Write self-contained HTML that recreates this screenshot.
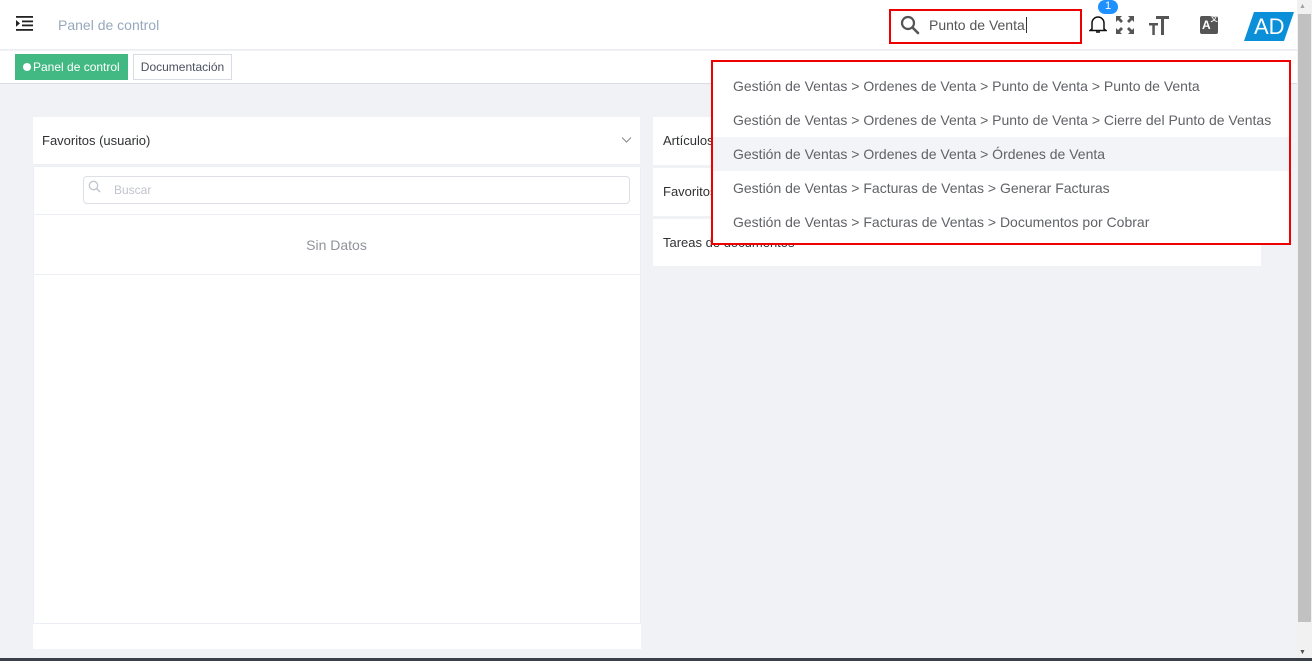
<!DOCTYPE html>
<html><head><meta charset="utf-8"><style>
*{box-sizing:border-box;margin:0;padding:0}
body{width:1312px;height:661px;overflow:hidden;background:#f1f2f6;font-family:"Liberation Sans",sans-serif;position:relative}
.a{position:absolute}
</style></head><body>
<div class="a" style="left:0;top:0;width:1297px;height:50px;background:#fff;border-bottom:1px solid #eceef2"></div>
<svg class="a" style="left:16px;top:16px" width="18" height="15" viewBox="0 0 18 15"><rect x="0" y="0" width="17" height="1.8" fill="#222"/><rect x="6" y="4.5" width="11" height="1.8" fill="#222"/><rect x="6" y="8.5" width="11" height="1.8" fill="#222"/><rect x="0" y="13" width="17" height="1.8" fill="#222"/><path d="M0 4 L4 7.4 L0 10.8Z" fill="#222"/></svg>
<div class="a" style="left:58px;top:17px;font-size:14px;color:#97a8be">Panel de control</div>
<div class="a" style="left:889px;top:9px;width:193px;height:35px;border:2px solid #e00"></div>
<svg class="a" style="left:900px;top:15px" width="20" height="20" viewBox="0 0 20 20"><circle cx="8" cy="8" r="6" fill="none" stroke="#555" stroke-width="2.2"/><path d="M12.5 12.5 L18 18" stroke="#555" stroke-width="2.6" stroke-linecap="round"/></svg>
<div class="a" style="left:929px;top:17px;font-size:14px;color:#555">Punto de Venta<span style="border-left:1px solid #333;margin-left:1px"></span></div>
<svg class="a" style="left:1089px;top:15px" width="18" height="19" viewBox="0 0 18 19"><path d="M3 14 L3 8 A6 6 0 0 1 15 8 L15 14 L17 15.5 L1 15.5 Z" fill="none" stroke="#111" stroke-width="1.5"/><path d="M7 17 h4" stroke="#111" stroke-width="1.5"/></svg>
<div class="a" style="left:1098px;top:0;width:20px;height:14px;border-radius:7px;background:#1e90ff;color:#fff;font-size:11px;text-align:center;line-height:13px">1</div>
<svg class="a" style="left:1116px;top:16px" width="18" height="18" viewBox="0 0 18 18" fill="#555"><path d="M0 0h6l-2 2 3 3-2 2-3-3-2 2z M18 0v6l-2-2-3 3-2-2 3-3-2-2z M0 18v-6l2 2 3-3 2 2-3 3 2 2z M18 18h-6l2-2-3-3 2-2 3 3 2-2z"/></svg>
<svg class="a" style="left:1149px;top:16px" width="20" height="19" viewBox="0 0 20 19" fill="#555"><rect x="7" y="0" width="13" height="3"/><rect x="12" y="0" width="3" height="19"/><rect x="0" y="7" width="9" height="2.5"/><rect x="3.3" y="7" width="2.5" height="12"/></svg>
<div class="a" style="left:1200px;top:16px;width:18px;height:18px;background:#555;border-radius:2px;color:#fff;font-size:12px;font-weight:bold;line-height:18px;padding-left:2px">A<span style="font-size:7px;vertical-align:top;line-height:8px">文</span></div>
<svg class="a" style="left:1244px;top:12px" width="50" height="29" viewBox="0 0 50 29"><path d="M10 0 H50 L40 29 H0 Z" fill="#0a8fd8"/></svg>
<div class="a" style="left:1254px;top:13px;font-size:22px;color:#fff;line-height:27px">AD</div>
<div class="a" style="left:1297px;top:0;width:15px;height:661px;background:#f1f1f1"></div>
<div class="a" style="left:1298px;top:14px;width:13px;height:608px;background:#c1c1c1"></div>
<div class="a" style="left:1299px;top:3px;font-size:7px;color:#a3a3a3">▲</div>
<div class="a" style="left:1299px;top:649px;font-size:7px;color:#505050">▼</div>
<div class="a" style="left:0;top:51px;width:1297px;height:33px;background:#fff;border-bottom:1px solid #d8dce5"></div>
<div class="a" style="left:15px;top:54px;width:113px;height:26px;background:#42b983;color:#fff;font-size:12px;line-height:26px;padding-left:8px"><span style="display:inline-block;width:8px;height:8px;border-radius:50%;background:#fff;margin-right:2px"></span>Panel de control</div>
<div class="a" style="left:133px;top:54px;width:99px;height:26px;border:1px solid #d8dce5;background:#fff;color:#495060;font-size:12px;line-height:24px;text-align:center">Documentación</div>
<div class="a" style="left:33px;top:117px;width:607px;height:48px;background:#fff;border-bottom:1px solid #ebeef5"></div>
<div class="a" style="left:42px;top:133px;font-size:13px;color:#303133">Favoritos (usuario)</div>
<svg class="a" style="left:621px;top:136px" width="11" height="8"><path d="M1 1.5 L5.5 6 L10 1.5" fill="none" stroke="#888" stroke-width="1"/></svg>
<div class="a" style="left:33px;top:166px;width:608px;height:458px;background:#fff;border:1px solid #ebeef5"></div>
<div class="a" style="left:33px;top:624px;width:608px;height:25px;background:#fff"></div>
<div class="a" style="left:83px;top:176px;width:547px;height:28px;border:1px solid #dcdfe6;border-radius:4px"></div>
<svg class="a" style="left:88px;top:180px" width="14" height="14"><circle cx="5.5" cy="5.5" r="4.2" fill="none" stroke="#c0c4cc" stroke-width="1.3"/><path d="M8.5 8.5 L12 12" stroke="#c0c4cc" stroke-width="1.5"/></svg>
<div class="a" style="left:114px;top:183px;font-size:12px;color:#c0c4cc">Buscar</div>
<div class="a" style="left:33px;top:214px;width:608px;height:1px;background:#ebeef5"></div>
<div class="a" style="left:33px;top:274px;width:608px;height:1px;background:#ebeef5"></div>
<div class="a" style="left:33px;top:237px;width:607px;text-align:center;font-size:14px;color:#909399">Sin Datos</div>
<div class="a" style="left:653px;top:117px;width:608px;height:48px;background:#fff"></div>
<div class="a" style="left:653px;top:168px;width:608px;height:48px;background:#fff"></div>
<div class="a" style="left:653px;top:219px;width:608px;height:47px;background:#fff"></div>
<div class="a" style="left:663px;top:133px;font-size:13px;color:#303133">Artículos</div>
<div class="a" style="left:663px;top:184px;font-size:13px;color:#303133">Favoritos</div>
<div class="a" style="left:663px;top:235px;font-size:13px;color:#303133">Tareas de documentos</div>
<div class="a" style="left:711px;top:60px;width:580px;height:185px;background:#fff;border:2px solid #e00;font-size:14px;color:#606266">
<div style="height:7px"></div>
<div style="height:34px;line-height:34px;padding-left:20px">Gestión de Ventas &gt; Ordenes de Venta &gt; Punto de Venta &gt; Punto de Venta</div>
<div style="height:34px;line-height:34px;padding-left:20px">Gestión de Ventas &gt; Ordenes de Venta &gt; Punto de Venta &gt; Cierre del Punto de Ventas</div>
<div style="height:34px;line-height:34px;padding-left:20px;background:#f3f4f7">Gestión de Ventas &gt; Ordenes de Venta &gt; Órdenes de Venta</div>
<div style="height:34px;line-height:34px;padding-left:20px">Gestión de Ventas &gt; Facturas de Ventas &gt; Generar Facturas</div>
<div style="height:34px;line-height:34px;padding-left:20px">Gestión de Ventas &gt; Facturas de Ventas &gt; Documentos por Cobrar</div>
</div>
<div class="a" style="left:0;top:658px;width:1312px;height:3px;background:#3a3f48"></div>
</body></html>
